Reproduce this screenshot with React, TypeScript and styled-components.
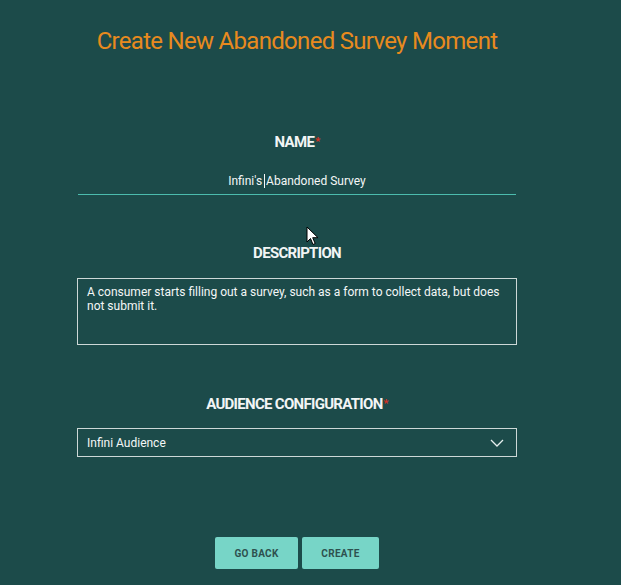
import styled, { createGlobalStyle } from 'styled-components';

const GlobalStyle = createGlobalStyle`
  html, body {
    margin: 0;
    padding: 0;
    background: #1c4b4a;
    font-family: Roboto, "Liberation Sans", sans-serif;
  }
`;

const App = () => {
  return (
    <>
      <GlobalStyle />
      <Page>
        <Column>
          <Title>Create New Abandoned Survey Moment</Title>

          <Field $top={76}>
            <Label>
              NAME<Required>*</Required>
            </Label>
            <NameInput>
              Infini's<Caret />Abandoned Survey
            </NameInput>
          </Field>

          <Field $top={49}>
            <Label>DESCRIPTION</Label>
            <TextArea>
              A consumer starts filling out a survey, such as a form to collect data, but does
              not submit it.
            </TextArea>
          </Field>

          <Field $top={50}>
            <Label>
              AUDIENCE CONFIGURATION<Required>*</Required>
            </Label>
            <Select>
              <span>Infini Audience</span>
              <svg width="14" height="8" viewBox="0 0 14 8">
                <path d="M1 1l6 6 6-6" fill="none" stroke="#e6efee" strokeWidth="1.3" />
              </svg>
            </Select>
          </Field>

          <Buttons>
            <Button $width={83}>GO BACK</Button>
            <Button $width={77}>CREATE</Button>
          </Buttons>
        </Column>
        <Pointer width="13" height="20" viewBox="0 0 13 20">
          <path d="M1 1v15l3.5-3.5 2.5 6 2.2-1-2.5-5.8H12z" fill="#fff" stroke="#000" strokeWidth="1" />
        </Pointer>
      </Page>
    </>
  );
};

export default App;

const Page = styled.div`
  position: relative;
  width: 621px;
  height: 585px;
  background: #1c4b4a;
  overflow: hidden;
`;

const Column = styled.div`
  width: 440px;
  margin-left: 77px;
  display: flex;
  flex-direction: column;
  align-items: stretch;
`;

const Title = styled.h1`
  margin: 25px 0 0;
  font-size: 24px;
  font-weight: 400;
  line-height: 32px;
  color: #e88a1e;
  text-align: center;
  letter-spacing: -0.7px;
`;

const Field = styled.div<{ $top: number }>`
  margin-top: ${(p) => p.$top}px;
  display: flex;
  flex-direction: column;
  align-items: stretch;
`;

const Label = styled.div`
  font-size: 15px;
  font-weight: 700;
  line-height: 18px;
  color: #f2f5f5;
  text-align: center;
  letter-spacing: -0.7px;
`;

const Required = styled.span`
  color: #e0301e;
  font-size: 11px;
  vertical-align: top;
  margin-left: 1px;
`;

const NameInput = styled.div`
  margin: 22px 1px 0;
  padding-bottom: 5px;
  border-bottom: 1px solid #4cbcae;
  font-size: 12px;
  line-height: 16px;
  color: #f4f7f7;
  text-align: center;
`;

const Caret = styled.span`
  display: inline-block;
  width: 1px;
  height: 14px;
  background: #f4f7f7;
  vertical-align: -3px;
  margin: 0 1px 0 2px;
`;

const TextArea = styled.div`
  margin-top: 16px;
  height: 67px;
  box-sizing: border-box;
  border: 1px solid #cdd8d7;
  padding: 6px 9px 5px;
  font-size: 12px;
  line-height: 14px;
  color: #f4f7f7;
`;

const Select = styled.div`
  margin-top: 15px;
  height: 29px;
  box-sizing: border-box;
  border: 1px solid #cdd8d7;
  padding: 0 12px 0 9px;
  display: flex;
  align-items: center;
  justify-content: space-between;
  font-size: 12px;
  color: #f4f7f7;
`;

const Buttons = styled.div`
  margin-top: 80px;
  display: flex;
  justify-content: center;
  gap: 4px;
`;

const Button = styled.button<{ $width: number }>`
  width: ${(p) => p.$width}px;
  height: 32px;
  border: none;
  border-radius: 2px;
  background: #77d5c7;
  color: #2e514f;
  font-family: Roboto, "Liberation Sans", sans-serif;
  font-size: 10px;
  font-weight: 700;
  letter-spacing: 0.3px;
  cursor: pointer;
`;

const Pointer = styled.svg`
  position: absolute;
  left: 306px;
  top: 226px;
`;
